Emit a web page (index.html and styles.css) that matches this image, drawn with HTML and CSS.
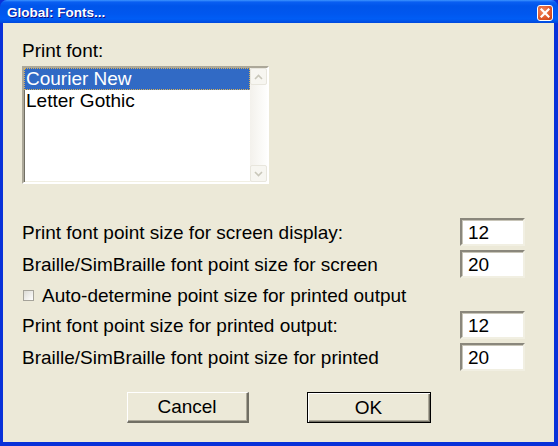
FILE: index.html
```html
<!DOCTYPE html>
<html>
<head>
<meta charset="utf-8">
<title>Global: Fonts...</title>
<link rel="stylesheet" href="styles.css">
</head>
<body>
<div class="window">
  <div class="titlebar">
    <span class="title">Global: Fonts...</span>
    <span class="close">
      <svg width="10" height="10" viewBox="0 0 10 10"><path d="M1.5 1.5 L8.5 8.5 M8.5 1.5 L1.5 8.5" stroke="#fff" stroke-width="2.2" stroke-linecap="square"/></svg>
    </span>
  </div>
  <div class="content">
    <div class="label">Print font:</div>
    <div class="listbox">
      <div class="items">
        <div class="item selected">Courier New</div>
        <div class="item">Letter Gothic</div>
      </div>
      <div class="scrollbar">
        <div class="sbtn"><svg width="9" height="6" viewBox="0 0 9 6"><path d="M1 5 L4.5 1.5 L8 5" fill="none" stroke="#c9c7ba" stroke-width="1.6"/></svg></div>
        <div class="track"></div>
        <div class="sbtn"><svg width="9" height="6" viewBox="0 0 9 6"><path d="M1 1 L4.5 4.5 L8 1" fill="none" stroke="#c9c7ba" stroke-width="1.6"/></svg></div>
      </div>
    </div>
    <div class="rows">
      <div class="row"><span class="text">Print font point size for screen display:</span><div class="field">12</div></div>
      <div class="row"><span class="text">Braille/SimBraille font point size for screen</span><div class="field">20</div></div>
      <div class="row check"><span class="cb"></span><span class="text">Auto-determine point size for printed output</span></div>
      <div class="row"><span class="text">Print font point size for printed output:</span><div class="field">12</div></div>
      <div class="row"><span class="text">Braille/SimBraille font point size for printed</span><div class="field">20</div></div>
    </div>
    <div class="buttons">
      <button class="btn cancel">Cancel</button>
      <button class="btn ok">OK</button>
    </div>
  </div>
</div>
</body>
</html>
```
FILE: styles.css
```css
html, body {
  margin: 0;
  padding: 0;
  width: 558px;
  height: 446px;
  overflow: hidden;
  background: #0a246a;
}
.window {
  width: 558px;
  height: 446px;
  display: flex;
  flex-direction: column;
  box-sizing: border-box;
  background: #0831d9;
  font-family: "Liberation Sans", Arial, sans-serif;
  font-size: 19px;
  color: #000;
}
.titlebar {
  height: 23px;
  flex: none;
  display: flex;
  align-items: center;
  justify-content: space-between;
  padding: 0 5px 0 7px;
  border-radius: 7px 7px 0 0;
  background: linear-gradient(to bottom, #3d95ff 0px, #0a5ff2 2px, #0055ea 6px, #0057ef 14px, #005df5 19px, #0048dd 23px);
}
.title {
  color: #fff;
  font-family: "Liberation Sans", Arial, sans-serif;
  font-weight: bold;
  font-size: 13.5px;
  text-shadow: 1px 1px 0 #0f1089;
  margin-top: 1px;
}
.close {
  width: 14px;
  height: 14px;
  border: 1px solid #fff;
  border-radius: 3px;
  background: radial-gradient(circle at 35% 35%, #f08a62 0%, #e05a2c 55%, #c23a12 100%);
  display: flex;
  align-items: center;
  justify-content: center;
  margin-top: 2px;
}
.content {
  flex: 1;
  margin: 0 4px 4px 3px;
  background: #ece9d8;
  padding: 18px 29px 0 19px;
  display: flex;
  flex-direction: column;
}
.label {
  line-height: 20px;
  height: 20px;
}
.listbox {
  margin-top: 5px;
  width: 247px;
  height: 118px;
  box-sizing: border-box;
  border-style: solid;
  border-width: 2px;
  border-color: #aca899 #fff #fff #aca899;
  box-shadow: inset 1px 1px 0 #716f64, inset -1px -1px 0 #f1efe2;
  background: #fff;
  display: flex;
}
.items {
  flex: 1;
}
.item {
  height: 22px;
  line-height: 22px;
  padding-left: 2px;
  box-sizing: border-box;
}
.item.selected {
  background: #316ac5;
  color: #fff;
  outline: 1px dotted #d9b25a;
  outline-offset: -1px;
}
.scrollbar {
  width: 17px;
  display: flex;
  flex-direction: column;
  background: linear-gradient(to right, #f3f1ec, #fefefd);
}
.sbtn {
  height: 17px;
  box-sizing: border-box;
  border: 1px solid #e8e6dd;
  border-radius: 2px;
  background: #f7f6f1;
  display: flex;
  align-items: center;
  justify-content: center;
}
.track { flex: 1; }
.rows {
  margin-top: 34px;
  display: flex;
  flex-direction: column;
  gap: 4px;
}
.row {
  height: 28px;
  display: flex;
  align-items: center;
  justify-content: space-between;
}
.row.check {
  height: 25px;
  justify-content: flex-start;
}
.text {
  line-height: 20px;
  margin-top: 2px;
}
.cb {
  width: 11px;
  height: 11px;
  box-sizing: border-box;
  border: 1px solid #a5a39a;
  background: linear-gradient(135deg, #dcdbd5, #fff);
  margin: 2px 8px 0 1px;
}
.field {
  width: 65px;
  height: 28px;
  box-sizing: border-box;
  border-style: solid;
  border-width: 2px;
  border-color: #8a877c #f1efe2 #f1efe2 #8a877c;
  box-shadow: inset 1px 1px 0 #c8c5b8;
  background: #fff;
  padding-left: 6px;
  line-height: 25px;
}
.buttons {
  margin-top: 21px;
  display: flex;
  justify-content: center;
  gap: 58px;
  padding-left: 10px;
}
.btn {
  height: 31px;
  box-sizing: border-box;
  font-family: "Liberation Sans", Arial, sans-serif;
  font-size: 19px;
  color: #000;
  background: #ece9d8;
  padding: 0;
}
.btn.cancel {
  width: 122px;
  border-style: solid;
  border-width: 1px 2px 2px 1px;
  border-color: #fff #716f64 #716f64 #fff;
  box-shadow: inset -1px -1px 0 #aca899;
}
.btn.ok {
  width: 124px;
  border: 1px solid #000;
  box-shadow: inset 1px 1px 0 #fff, inset -1px -1px 0 #716f64, inset -2px -2px 0 #aca899;
}
```
